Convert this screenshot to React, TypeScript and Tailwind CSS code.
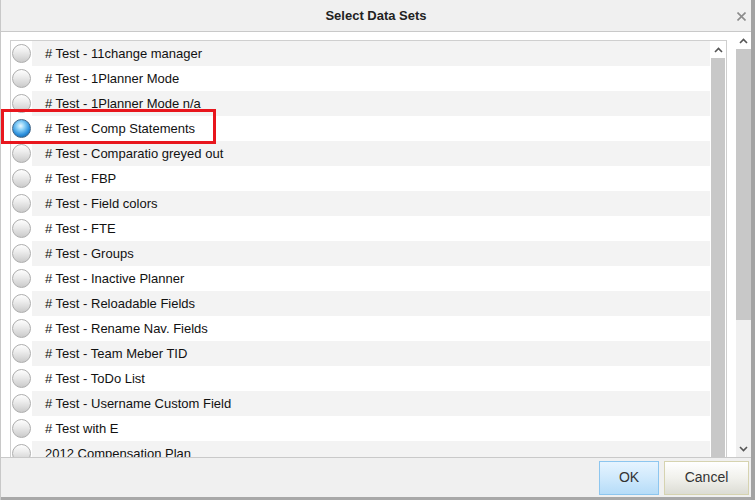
import React from "react";

const items = [
  "# Test - 11change manager",
  "# Test - 1Planner Mode",
  "# Test - 1Planner Mode n/a",
  "# Test - Comp Statements",
  "# Test - Comparatio greyed out",
  "# Test - FBP",
  "# Test - Field colors",
  "# Test - FTE",
  "# Test - Groups",
  "# Test - Inactive Planner",
  "# Test - Reloadable Fields",
  "# Test - Rename Nav. Fields",
  "# Test - Team Meber TID",
  "# Test - ToDo List",
  "# Test - Username Custom Field",
  "# Test with E",
  "2012 Compensation Plan",
];

function Radio({ checked }: { checked: boolean }) {
  if (checked) {
    return (
      <div className="w-[19px] h-[19px] rounded-full border border-[#3f6586] bg-[radial-gradient(circle_at_45%_35%,#eaf8ff_0%,#8ad0f7_28%,#2b8fdc_62%,#0b4a86_100%)]" />
    );
  }
  return (
    <div className="w-[19px] h-[19px] rounded-full border border-[#adadad] bg-[linear-gradient(180deg,#fefefe_0%,#ececec_40%,#cacaca_100%)]" />
  );
}

function Up() {
  return (
    <svg width="9" height="6" viewBox="0 0 9 6">
      <path d="M1 5 L4.5 1.5 L8 5" fill="none" stroke="#555" strokeWidth="1.6" />
    </svg>
  );
}
function Down() {
  return (
    <svg width="9" height="6" viewBox="0 0 9 6">
      <path d="M1 1 L4.5 4.5 L8 1" fill="none" stroke="#555" strokeWidth="1.6" />
    </svg>
  );
}

export default function App() {
  return (
    <div
      className="relative w-[755px] h-[500px] flex flex-col bg-white border-l border-[#c8c8c8] border-r-[4px] border-r-[#a3a3a3] overflow-hidden"
      style={{ fontFamily: '"Liberation Sans", Arial, sans-serif' }}
    >
      <div className="h-[32px] shrink-0 bg-[#f0f0f0] border-b border-[#c9c9c9] flex items-center justify-center relative">
        <span className="text-[13px] font-bold text-[#222]">Select Data Sets</span>
        <svg className="absolute right-[5px] top-[12px]" width="9" height="9" viewBox="0 0 9 9">
          <path d="M0.5 0.5 L8.5 8.5 M8.5 0.5 L0.5 8.5" stroke="#8c8c8c" strokeWidth="1.6" />
        </svg>
      </div>
      <div className="flex-1 flex min-h-0">
        <div className="flex-1 min-w-0 pl-[9px] pt-[8px] pr-[9px] overflow-hidden">
          <div className="h-full border-t border-l border-r border-[#cfcfcf] flex">
            <div className="flex-1 min-w-0">
              {items.map((t, i) => (
                <div key={t} className="h-[25px] flex">
                  <div className="w-[21px] shrink-0 bg-white flex items-center justify-center">
                    <Radio checked={i === 3} />
                  </div>
                  <div
                    className={`flex-1 flex items-center pl-[13px] text-[13px] text-[#111] ${
                      i % 2 === 0 ? "bg-[#f3f3f3]" : "bg-white"
                    }`}
                  >
                    {t}
                  </div>
                </div>
              ))}
            </div>
            <div className="w-[16px] shrink-0 flex flex-col bg-white">
              <div className="h-[17px] flex items-center justify-center">
                <Up />
              </div>
              <div className="flex-1 bg-[#c8c8c8] mx-[1px]" />
            </div>
          </div>
        </div>
        <div className="w-[15px] shrink-0 flex flex-col bg-[#f0f0f0]">
          <div className="h-[17px] bg-white flex items-center justify-center">
            <Up />
          </div>
          <div className="h-[271px] bg-[#c8c8c8]" />
          <div className="flex-1" />
          <div className="h-[17px] flex items-center justify-center">
            <Down />
          </div>
        </div>
      </div>
      <div className="h-[43px] shrink-0 bg-[#f0f0f0] border-t border-[#c9c9c9] border-b-[3px] border-b-[#a8a8a8] flex items-center justify-end gap-[5px] pr-[2px]">
        <button className="w-[60px] h-[34px] border border-[#8dc6ef] bg-[linear-gradient(180deg,#e6f4ff_0%,#cfe9fc_50%,#b6dcf8_100%)] text-[14px] text-[#333]">
          OK
        </button>
        <button className="w-[85px] h-[34px] border border-[#d6d3b0] bg-[linear-gradient(180deg,#ffffff_0%,#f1f1ec_50%,#dcdcd4_100%)] text-[14px] text-[#333]">
          Cancel
        </button>
      </div>
      <div className="absolute left-0 top-[109px] w-[215px] h-[35px] border-[3px] border-[#e8161d]" />
    </div>
  );
}
